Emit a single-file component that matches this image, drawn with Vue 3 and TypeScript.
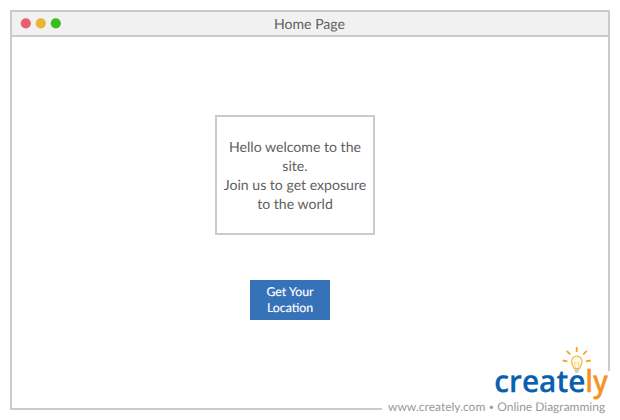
<script setup lang="ts">
const title: string = 'Home Page'
const lights: string[] = ['red', 'amber', 'green']
const welcome: string[] = ['Hello welcome to the', 'site.', 'Join us to get exposure', 'to the world']
const action: string[] = ['Get Your', 'Location']
</script>

<template>
  <div class="page">
    <section class="window">
      <header class="titlebar">
        <svg class="lights" width="60" height="23" viewBox="0 0 60 23">
          <circle v-for="(l, i) in lights" :key="l" :class="l" :cx="13.8 + i * 15" cy="11.3" r="5.100" />
        </svg>
        <h1 class="title">{{ title }}</h1>
      </header>
      <main class="content">
        <div class="card">
          <span v-for="line in welcome" :key="line">{{ line }}</span>
        </div>
        <button class="action" type="button">
          <span v-for="line in action" :key="line">{{ line }}</span>
        </button>
      </main>
    </section>

    <footer class="brand">
      <svg class="logo" width="120" height="58" viewBox="0 0 120 58">
        <g class="rays">
          <path d="M78.700 3v5M68.700 6.800l3.500 3.500M88.800 6.800l-3.500 3.500M64.700 16.500l4.700 .8M92.700 16.500l-4.700 .8" />
        </g>
        <path class="bulb" d="M76 24.5c-.2-2.500-2.500-3.600-2.500-7a5.300 5.300 0 0 1 10.600 0c0 3.400-2.300 4.500-2.500 7z" />
        <path class="filament" d="M77.500 24l-1-6 2.300 1.500 2.300-1.500-1 6" />
        <path class="base" d="M76.300 26h5M77 28h3.600" />
        <text class="word blue" x="-3.700" y="47.700" textLength="91" lengthAdjust="spacingAndGlyphs">create</text>
        <text class="word orange" x="87.300" y="47.700" textLength="22.700" lengthAdjust="spacingAndGlyphs">ly</text>
      </svg>
      <div class="tagline">
        <span class="site">www.creately.com</span><span class="dot">•</span><span class="slogan">Online Diagramming</span>
      </div>
    </footer>
  </div>
</template>

<style>
body {
  margin: 0;
  background: #fff;
}
</style>

<style scoped>
.page {
  position: relative;
  box-sizing: border-box;
  width: 620px;
  height: 420px;
  padding: 10px;
  overflow: hidden;
  background: #fff;
  font-family: Lato, "Liberation Sans", sans-serif;
  color: #606060;
  text-rendering: geometricPrecision;
}
.window {
  box-sizing: border-box;
  width: 600px;
  height: 400px;
  border: 2px solid #cbcbcb;
}
.titlebar {
  display: grid;
  grid-template-columns: 1fr auto 1fr;
  align-items: center;
  height: 23px;
  background: #f1f1f1;
  border-bottom: 2px solid #cbcbcb;
}
.lights { display: block; }
.red { fill: #ea5f6c; }
.amber { fill: #ebb533; }
.green { fill: #3bbd1c; }
.title {
  margin: 0 1px 0 0;
  padding-top: 2px;
  font-size: 14.1px;
  font-weight: 400;
  line-height: 21px;
}
.content {
  display: flex;
  flex-direction: column;
  align-items: flex-start;
  padding-top: 78px;
}
.card {
  box-sizing: border-box;
  display: flex;
  flex-direction: column;
  align-items: center;
  justify-content: center;
  width: 160px;
  height: 120px;
  margin-left: 203px;
  padding-top: 2px;
  border: 2px solid #cbcbcb;
  font-size: 14.1px;
  line-height: 19px;
  white-space: nowrap;
}
.action {
  display: flex;
  flex-direction: column;
  align-items: center;
  justify-content: center;
  width: 80px;
  height: 40px;
  margin: 45px 0 0 238px;
  padding: 0;
  border: 0;
  background: #3672b8;
  color: #fff;
  font: 12.3px/16px Lato, "Liberation Sans", sans-serif;
  text-rendering: geometricPrecision;
  -webkit-text-stroke: 0.15px #fff;
}
/* The brand mark lies over the window's lower right corner. */
.brand {
  position: absolute;
  right: 0;
  bottom: 0;
  width: 238px;
  height: 49px;
  background: #fff;
}
.logo {
  position: absolute;
  left: 116px;
  top: -27px;
  overflow: visible;
}
.word {
  font-family: "Open Sans", "Noto Sans", sans-serif;
  font-size: 30.5px;
  font-weight: 600;
  stroke-width: 0.25px;
}
.blue { fill: #0860ae; stroke: #0860ae; }
.orange { fill: #f6921e; stroke: #f6921e; }
.rays {
  fill: none;
  stroke: #f5a32b;
  stroke-width: 1.8;
}
.bulb {
  fill: #fffbe5;
  stroke: #f5b54a;
  stroke-width: 1.2;
}
.filament {
  fill: none;
  stroke: #f9dc86;
  stroke-width: 1;
}
.base {
  stroke: #a7a08c;
  stroke-width: 1.2;
}
.tagline {
  position: absolute;
  left: 6px;
  top: 28px;
  display: flex;
  font-size: 12px;
  line-height: 16px;
  color: #999;
  white-space: nowrap;
}
.dot {
  width: 12px;
  font-size: 9px;
  text-align: center;
}
</style>
